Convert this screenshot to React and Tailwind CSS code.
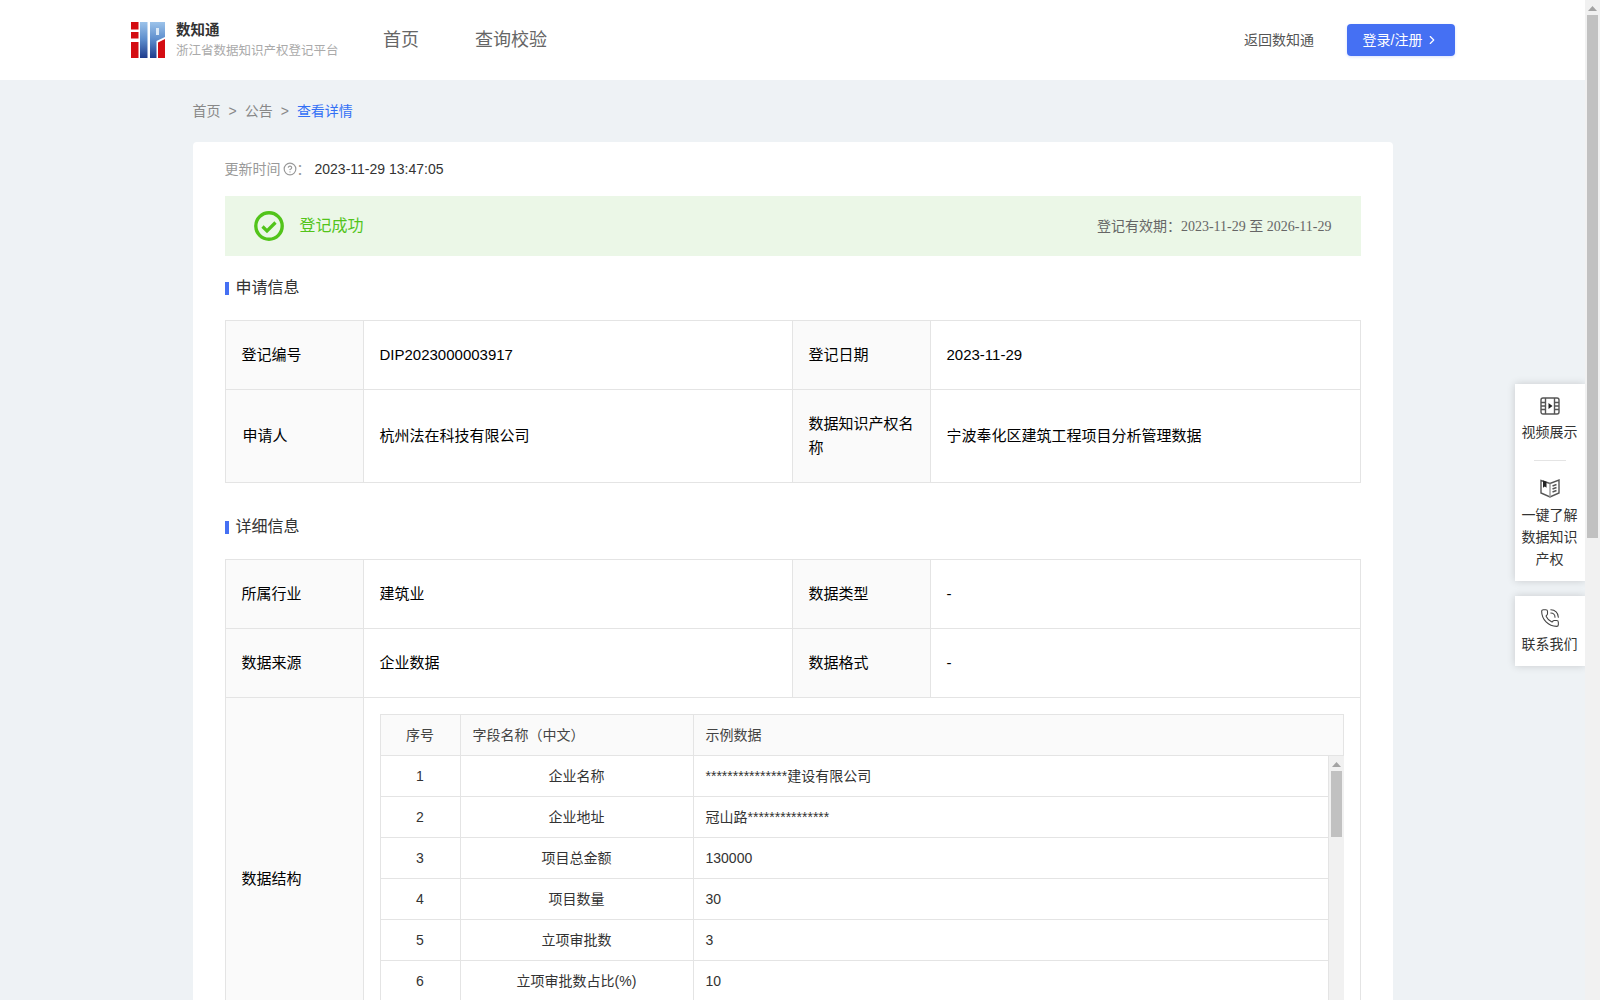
import { ChevronRight, CircleHelp, PhoneCall } from "lucide-react";

const SANS = "font-['Liberation_Sans','Noto_Sans_CJK_SC',sans-serif]";

const FIELDS = [
  ["1", "企业名称", "***************建设有限公司"],
  ["2", "企业地址", "冠山路***************"],
  ["3", "项目总金额", "130000"],
  ["4", "项目数量", "30"],
  ["5", "立项审批数", "3"],
  ["6", "立项审批数占比(%)", "10"],
  ["", "", ""],
];

function Logo() {
  return (
    <svg width="35" height="36" viewBox="0 0 35 36" className="shrink-0">
      <defs>
        <linearGradient id="logoBlue" x1="0" y1="0" x2="0" y2="1">
          <stop offset="0" stopColor="#9cc3ea" />
          <stop offset="0.5" stopColor="#5b8bcb" />
          <stop offset="1" stopColor="#1f3c8c" />
        </linearGradient>
      </defs>
      <rect x="0" y="0" width="7.5" height="7.5" fill="#d40d12" />
      <rect x="0" y="10" width="7.5" height="6.5" fill="#d40d12" />
      <rect x="0" y="20" width="7.5" height="16" fill="#d40d12" />
      <rect x="9" y="0" width="7.5" height="36" fill="url(#logoBlue)" />
      <path d="M19 0H34V15L25.5 19V36H19Z" fill="url(#logoBlue)" />
      <rect x="25" y="6" width="3" height="7" fill="#dbe9f7" />
      <path d="M27 20.5L34 17V36H27Z" fill="#d40d12" />
    </svg>
  );
}

function Scrollbar({ thumbClass, className }) {
  return (
    <div className={`flex flex-col items-center bg-[#f1f1f1] ${className}`}>
      <svg width="9" height="5" viewBox="0 0 9 5" className="mt-[6px] mb-[4px] shrink-0">
        <path d="M4.5 0L9 5H0Z" fill="#a3a3a3" />
      </svg>
      <div className={`bg-[#c1c1c1] ${thumbClass}`} />
    </div>
  );
}

function SectionTitle({ children, className = "" }) {
  return (
    <div className={`flex h-[64px] items-center gap-[7px] text-base text-[#333] ${className}`}>
      <span className="h-[13px] w-1 bg-[#4570f3]" />
      {children}
    </div>
  );
}

function Label({ children, className = "" }) {
  return (
    <td className={`border border-[#e4e4e4] bg-[#fafafa] px-4 text-[15px] leading-6 text-black ${className}`}>
      {children}
    </td>
  );
}

function Value({ children, className = "" }) {
  return (
    <td className={`border border-[#e4e4e4] px-4 text-[15px] leading-6 text-black ${className}`}>
      {children}
    </td>
  );
}

function InfoCols() {
  return (
    <colgroup>
      <col className="w-[138px]" />
      <col className="w-[429px]" />
      <col className="w-[138px]" />
      <col />
    </colgroup>
  );
}

function FilmIcon() {
  return (
    <svg width="20" height="20" viewBox="0 0 20 20" fill="none" stroke="#555" strokeWidth="1.4">
      <rect x="1" y="2" width="18" height="16" rx="2" />
      <path d="M5.5 2v16M14.5 2v16M1 6.5h4.5M1 10h4.5M1 13.5h4.5M14.5 6.5H19M14.5 10H19M14.5 13.5H19" />
      <path d="M8.5 7l4 3-4 3z" fill="#222" stroke="none" />
    </svg>
  );
}

function BookIcon() {
  return (
    <svg width="20" height="20" viewBox="0 0 20 20" fill="none" stroke="#555" strokeWidth="1.4">
      <path d="M1 2.5l9 3 9-3.5V15l-9 4-9-4z" />
      <path d="M10 5.5V19" stroke="#999" />
      <path d="M3 2.5l3.5 1.2v6l-1.7-1.2-1.8 1.2z" fill="#222" stroke="none" />
      <path d="M12.5 8l4-1.5M12.5 11l4-1.5M12.5 14l4-1.5" />
    </svg>
  );
}

function SideWidget() {
  return (
    <div className="absolute right-0 top-[384px] flex w-[70px] flex-col gap-[15px] text-center text-sm text-[#333]">
      <div className="flex h-[197px] flex-col items-center bg-white pt-3 pr-[1px] shadow-[0_0_8px_rgba(0,0,0,0.16)]">
        <FilmIcon />
        <div className="mt-[5px] leading-[22px]">视频展示</div>
        <div className="mt-[17px] mb-[17px] h-px w-8 bg-[#e4e4e4]" />
        <BookIcon />
        <div className="mt-[6px] w-14 leading-[22px]">一键了解数据知识产权</div>
      </div>
      <div className="flex h-[70px] flex-col items-center bg-white pt-3 pr-[1px] shadow-[0_0_8px_rgba(0,0,0,0.16)]">
        <PhoneCall size={20} strokeWidth={1.3} color="#444" />
        <div className="mt-[5px] leading-[22px]">联系我们</div>
      </div>
    </div>
  );
}

function FieldTable() {
  return (
    <div className="border-l border-t border-[#e4e4e4] text-sm text-[#333]">
      <div className="flex h-[41px] items-center border-b border-r border-[#e4e4e4] bg-[#fafafa] text-[#444]">
        <div className="flex h-full w-[80px] items-center justify-center border-r border-[#e4e4e4]">序号</div>
        <div className="flex h-full w-[233px] items-center border-r border-[#e4e4e4] px-3">字段名称（中文）</div>
        <div className="px-3">示例数据</div>
      </div>
      <div className="flex">
        <div className="min-w-0 flex-1">
          {FIELDS.map(([no, name, sample], i) => (
            <div key={i} className="flex h-[41px] items-center border-b border-r border-[#e4e4e4]">
              <div className="flex h-full w-[80px] items-center justify-center border-r border-[#e4e4e4]">{no}</div>
              <div className="flex h-full w-[233px] items-center justify-center border-r border-[#e4e4e4]">{name}</div>
              <div className="px-3">{sample}</div>
            </div>
          ))}
        </div>
        <Scrollbar className="w-[15px]" thumbClass="h-[66px] w-[11px]" />
      </div>
    </div>
  );
}

export default function App() {
  return (
    <div className={`flex h-screen overflow-hidden bg-[#eef2f5] ${SANS}`}>
      <div className="relative min-w-0 flex-1 overflow-hidden">
        <header className="flex h-[80px] items-center bg-white pl-[131px] pr-[130px]">
          <Logo />
          <div className="ml-[10px] w-[207px]">
            <div className="text-[14.5px] font-bold leading-5 text-[#333]">数知通</div>
            <div className="mt-[1px] text-[12.5px] leading-5 text-[#aaa]">浙江省数据知识产权登记平台</div>
          </div>
          <nav className="flex gap-14 text-lg text-[#666]">
            <span>首页</span>
            <span>查询校验</span>
          </nav>
          <div className="ml-auto flex items-center gap-[33px]">
            <span className="text-sm text-[#555]">返回数知通</span>
            <button className="flex h-8 w-[108px] items-center justify-center gap-[3px] rounded-sm bg-[#4570f3] text-sm text-white shadow-[0_1px_3px_rgba(69,112,243,0.2)]">
              登录/注册
              <ChevronRight size={14} />
            </button>
          </div>
        </header>

        <div className="mx-auto w-[1200px]">
          <div className="flex h-[62px] items-center gap-2 text-sm text-[#888]">
            <span>首页</span>
            <span>&gt;</span>
            <span>公告</span>
            <span>&gt;</span>
            <span className="text-[#3370f5]">查看详情</span>
          </div>

          <div className="rounded-t bg-white px-8">
            <div className="flex h-[54px] items-center text-sm">
              <span className="text-[#999]">更新时间</span>
              <CircleHelp size={14} color="#999" className="ml-[2px]" />
              <span className="mr-1 text-[#999]">：</span>
              <span className="text-[#333]">2023-11-29 13:47:05</span>
            </div>

            <div className="flex h-[60px] items-center bg-[#ebf7e7] pl-[29px] pr-[29px]">
              <svg width="30" height="30" viewBox="0 0 30 30" fill="none" stroke="#52c41a">
                <circle cx="15" cy="15" r="13.2" strokeWidth="3.4" />
                <path d="M8.5 15.5l4.5 4.5 8.5-8.5" strokeWidth="3.2" />
              </svg>
              <span className="ml-4 text-base text-[#52c41a]">登记成功</span>
              <div className="ml-auto text-sm text-[#666]">
                登记有效期：
                <span className="font-['Liberation_Serif','Noto_Sans_CJK_SC',serif]">2023-11-29 至 2026-11-29</span>
              </div>
            </div>

            <SectionTitle>申请信息</SectionTitle>
            <table className="w-full table-fixed border-collapse">
              <InfoCols />
              <tbody>
                <tr className="h-[69px]">
                  <Label>登记编号</Label>
                  <Value>DIP2023000003917</Value>
                  <Label>登记日期</Label>
                  <Value>2023-11-29</Value>
                </tr>
                <tr className="h-[93px]">
                  <Label className="pl-[17px]">申请人</Label>
                  <Value>杭州法在科技有限公司</Value>
                  <Label>数据知识产权名称</Label>
                  <Value>宁波奉化区建筑工程项目分析管理数据</Value>
                </tr>
              </tbody>
            </table>

            <SectionTitle className="mt-3">详细信息</SectionTitle>
            <table className="w-full table-fixed border-collapse">
              <InfoCols />
              <tbody>
                <tr className="h-[69px]">
                  <Label>所属行业</Label>
                  <Value>建筑业</Value>
                  <Label>数据类型</Label>
                  <Value>-</Value>
                </tr>
                <tr className="h-[69px]">
                  <Label>数据来源</Label>
                  <Value>企业数据</Value>
                  <Label>数据格式</Label>
                  <Value>-</Value>
                </tr>
                <tr>
                  <Label>数据结构</Label>
                  <td colSpan={3} className="border border-[#e4e4e4] p-4">
                    <FieldTable />
                  </td>
                </tr>
              </tbody>
            </table>
          </div>
        </div>

        <SideWidget />
      </div>

      <Scrollbar className="w-[15px] shrink-0" thumbClass="h-[523px] w-[11px]" />
    </div>
  );
}
